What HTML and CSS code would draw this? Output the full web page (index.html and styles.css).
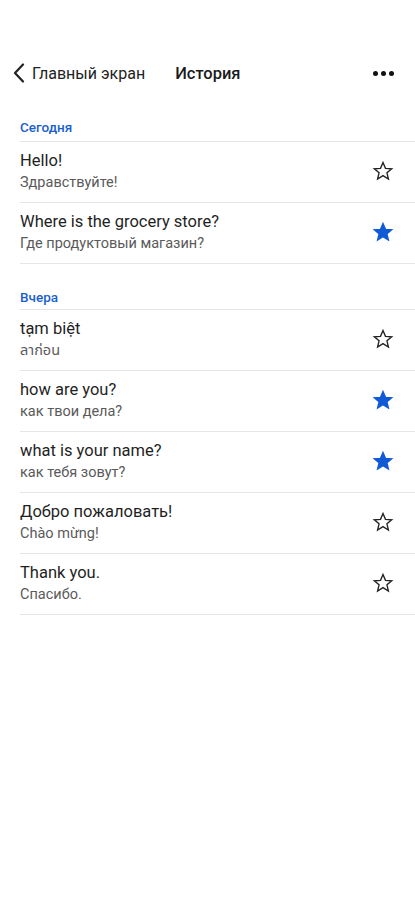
FILE: index.html
```html
<!DOCTYPE html>
<html lang="ru">
<head>
    <meta charset="UTF-8">
    <meta name="viewport" content="width=device-width, initial-scale=1.0">
    <title>История</title>
    <link rel="stylesheet" href="styles.css">
</head>
<body>
    <div class="top-nav">
        <div class="back">
            <svg class="chevron" width="12" height="20" viewBox="0 0 12 20">
                <path d="M10 1.5 L2 10 L10 18.5" fill="none" stroke="#222" stroke-width="2.2" stroke-linecap="round" stroke-linejoin="round"/>
            </svg>
            <span>Главный экран</span>
        </div>
        <div class="title">История</div>
        <div class="more">
            <span class="dot"></span><span class="dot"></span><span class="dot"></span>
        </div>
    </div>

    <div class="history">
        <div class="section-label">Сегодня</div>
        <div class="item">
            <div class="texts">
                <p class="source">Hello!</p>
                <p class="target">Здравствуйте!</p>
            </div>
            <svg class="star" viewBox="0 0 24 24"><path d="M12 2.8 L14.7 9.1 L21.5 9.6 L16.3 14 L17.9 20.7 L12 17.1 L6.1 20.7 L7.7 14 L2.5 9.6 L9.3 9.1 Z"/></svg>
        </div>
        <div class="item">
            <div class="texts">
                <p class="source">Where is the grocery store?</p>
                <p class="target">Где продуктовый магазин?</p>
            </div>
            <svg class="star starred" viewBox="0 0 24 24"><path d="M12 2.8 L14.7 9.1 L21.5 9.6 L16.3 14 L17.9 20.7 L12 17.1 L6.1 20.7 L7.7 14 L2.5 9.6 L9.3 9.1 Z"/></svg>
        </div>

        <div class="section-label later">Вчера</div>
        <div class="item">
            <div class="texts">
                <p class="source">tạm biệt</p>
                <p class="target">ลาก่อน</p>
            </div>
            <svg class="star" viewBox="0 0 24 24"><path d="M12 2.8 L14.7 9.1 L21.5 9.6 L16.3 14 L17.9 20.7 L12 17.1 L6.1 20.7 L7.7 14 L2.5 9.6 L9.3 9.1 Z"/></svg>
        </div>
        <div class="item">
            <div class="texts">
                <p class="source">how are you?</p>
                <p class="target">как твои дела?</p>
            </div>
            <svg class="star starred" viewBox="0 0 24 24"><path d="M12 2.8 L14.7 9.1 L21.5 9.6 L16.3 14 L17.9 20.7 L12 17.1 L6.1 20.7 L7.7 14 L2.5 9.6 L9.3 9.1 Z"/></svg>
        </div>
        <div class="item">
            <div class="texts">
                <p class="source">what is your name?</p>
                <p class="target">как тебя зовут?</p>
            </div>
            <svg class="star starred" viewBox="0 0 24 24"><path d="M12 2.8 L14.7 9.1 L21.5 9.6 L16.3 14 L17.9 20.7 L12 17.1 L6.1 20.7 L7.7 14 L2.5 9.6 L9.3 9.1 Z"/></svg>
        </div>
        <div class="item">
            <div class="texts">
                <p class="source">Добро пожаловать!</p>
                <p class="target">Chào mừng!</p>
            </div>
            <svg class="star" viewBox="0 0 24 24"><path d="M12 2.8 L14.7 9.1 L21.5 9.6 L16.3 14 L17.9 20.7 L12 17.1 L6.1 20.7 L7.7 14 L2.5 9.6 L9.3 9.1 Z"/></svg>
        </div>
        <div class="item">
            <div class="texts">
                <p class="source">Thank you.</p>
                <p class="target">Спасибо.</p>
            </div>
            <svg class="star" viewBox="0 0 24 24"><path d="M12 2.8 L14.7 9.1 L21.5 9.6 L16.3 14 L17.9 20.7 L12 17.1 L6.1 20.7 L7.7 14 L2.5 9.6 L9.3 9.1 Z"/></svg>
        </div>
    </div>
</body>
</html>
```

FILE: styles.css
```css
/* Global styles */
* {
    margin: 0;
    padding: 0;
    box-sizing: border-box;
}

body {
    background-color: #fff;
    font-family: Roboto, 'Noto Sans', 'Noto Sans Thai', Arial, sans-serif;
    color: #202124;
}

/* Top navigation */
.top-nav {
    display: flex;
    align-items: center;
    height: 44px;
    margin-top: 51px;
    padding: 0 21px 0 13px;
}

.back {
    display: flex;
    align-items: center;
    font-size: 16px;
    color: #222;
}

.chevron {
    margin-right: 7px;
}

.title {
    font-size: 16.5px;
    font-weight: 500;
    margin-left: 30px;
    color: #1a1a1a;
}

.more {
    margin-left: auto;
    display: flex;
    gap: 3px;
}

.dot {
    width: 5px;
    height: 5px;
    border-radius: 50%;
    background-color: #111;
}

/* History list */
.history {
    padding-left: 20px;
    margin-top: 9px;
}

.section-label {
    font-size: 13.5px;
    font-weight: 500;
    color: #1a5fcc;
    height: 38px;
    padding-top: 15px;
    border-bottom: 1px solid #e6e6e6;
}

.section-label.later {
    height: 46px;
    padding-top: 25px;
}

.item {
    display: flex;
    align-items: center;
    height: 61px;
    padding-right: 21px;
    border-bottom: 1px solid #e6e6e6;
}

.texts {
    flex: 1;
    margin-top: -1px;
}

.source {
    font-size: 16.5px;
    color: #1f1f1f;
    line-height: 20px;
}

.target {
    font-size: 14.5px;
    color: #5a5a5a;
    line-height: 18px;
    margin-top: 3px;
}

.star {
    width: 22px;
    height: 22px;
    margin-top: -2px;
    fill: none;
    stroke: #222;
    stroke-width: 1.5;
    stroke-linejoin: miter;
}

.star.starred {
    fill: #0f5bd6;
    stroke: #0f5bd6;
}
```
